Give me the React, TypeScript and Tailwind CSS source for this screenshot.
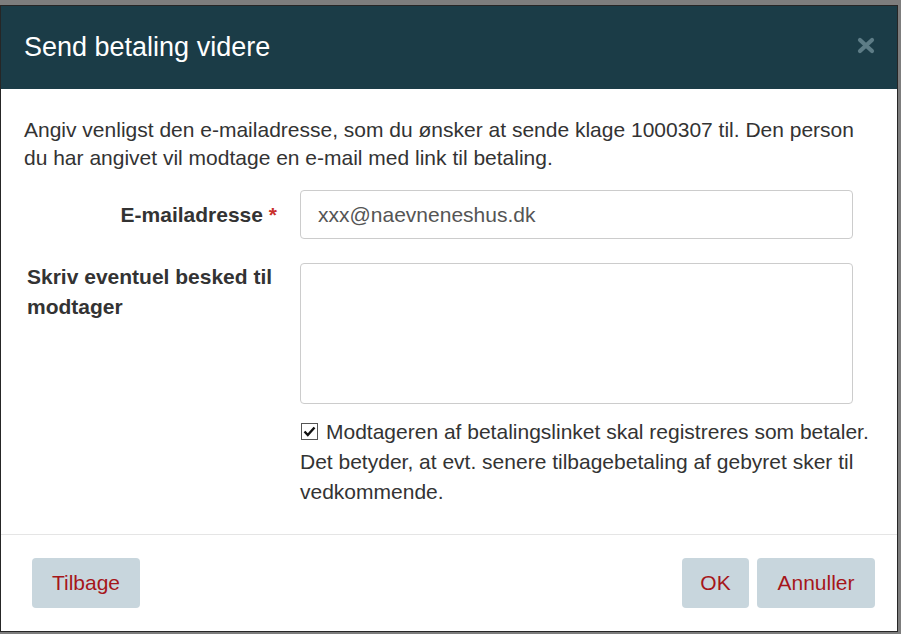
import { useState } from "react";

export default function App() {
  const [email, setEmail] = useState("xxx@naevneneshus.dk");
  const [message, setMessage] = useState("");
  const [registerPayer, setRegisterPayer] = useState(true);

  return (
    <div className="w-[901px] h-[634px] overflow-hidden bg-[#7d7d7d] pt-[5px] font-['Liberation_Sans',Arial,sans-serif]">
      {/* Modal */}
      <div className="w-[898px] h-[627px] bg-white border border-[#262626] flex flex-col">
        {/* Header */}
        <div className="h-[83px] shrink-0 bg-[#1b3c47] pl-[23px] pr-[22px] flex items-center justify-between">
          <h1 className="text-[27px] text-white leading-none">Send betaling videre</h1>
          <button className="mb-[4px]" aria-label="Luk">
            <svg width="18" height="17" viewBox="0 0 18 17">
              <path d="M3 3 L15 14 M15 3 L3 14" stroke="#5d7c86" strokeWidth="4.2" strokeLinecap="round" />
            </svg>
          </button>
        </div>

        {/* Body */}
        <div className="flex-1 pt-[27px] pl-[23px] text-[#333] text-[21px]">
          <p className="w-[830px] leading-[28px]">
            Angiv venligst den e-mailadresse, som du ønsker at sende klage 1000307 til. Den person du har angivet vil
            modtage en e-mail med link til betaling.
          </p>

          <div className="mt-[18px] flex items-center">
            <label className="w-[253px] text-right font-bold">
              E-mailadresse <span className="text-[#c9302c]">*</span>
            </label>
            <input
              value={email}
              onChange={(e) => setEmail(e.target.value)}
              className="ml-[23px] w-[553px] h-[49px] rounded-[4px] border border-[#cccccc] px-[17px] text-[21px] text-[#555] outline-none"
            />
          </div>

          <div className="mt-[24px] flex items-start">
            <label className="w-[253px] pl-[3px] pr-[4px] font-bold leading-[30px] -mt-[1px]">
              Skriv eventuel besked til modtager
            </label>
            <textarea
              value={message}
              onChange={(e) => setMessage(e.target.value)}
              className="ml-[23px] w-[553px] h-[141px] rounded-[4px] border border-[#cccccc] px-[17px] py-[10px] text-[21px] text-[#555] outline-none resize-none"
            />
          </div>

          <div className="mt-[13px] ml-[276px] w-[580px] leading-[30px]">
            <label className="cursor-pointer">
              <input
                type="checkbox"
                checked={registerPayer}
                onChange={(e) => setRegisterPayer(e.target.checked)}
                className="sr-only"
              />
              <span className="inline-flex items-center justify-center w-[17px] h-[17px] mr-[8px] ml-[1px] align-[2px] border border-[#555] bg-white">
                {registerPayer && (
                  <svg width="13" height="11" viewBox="0 0 13 11">
                    <path d="M1.5 5.5 L4.8 9 L11.5 1.5" fill="none" stroke="#111" strokeWidth="2.4" />
                  </svg>
                )}
              </span>
              Modtageren af betalingslinket skal registreres som betaler. Det betyder, at evt. senere tilbagebetaling af
              gebyret sker til vedkommende.
            </label>
          </div>
        </div>

        {/* Footer */}
        <div className="h-[97px] shrink-0 border-t border-[#e5e5e5] pl-[31px] pr-[22px] flex items-center justify-between">
          <button className="h-[50px] w-[108px] rounded-[4px] bg-[#c8d6dd] text-[#a6161a] text-[21px]">Tilbage</button>
          <div className="flex gap-[8px]">
            <button className="h-[50px] w-[67px] rounded-[4px] bg-[#c8d6dd] text-[#a6161a] text-[21px]">OK</button>
            <button className="h-[50px] w-[118px] rounded-[4px] bg-[#c8d6dd] text-[#a6161a] text-[21px]">Annuller</button>
          </div>
        </div>
      </div>
    </div>
  );
}
